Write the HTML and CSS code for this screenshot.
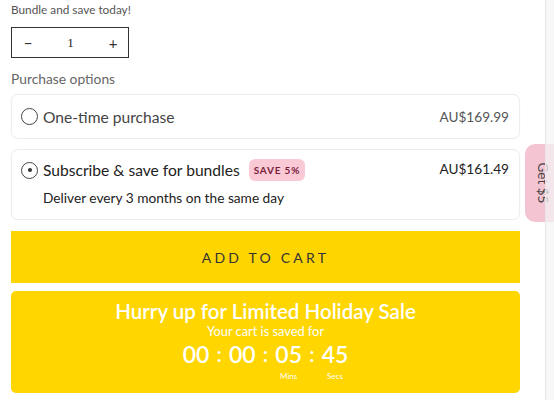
FILE: index.html
```html
<!DOCTYPE html>
<html>
<head>
<meta charset="utf-8">
<link rel="stylesheet" href="styles.css">
</head>
<body>
<main class="product">
  <p class="tagline">Bundle and save today!</p>
  <div class="qty">
    <span class="qty-btn">−</span>
    <span class="qty-val">1</span>
    <span class="qty-btn">+</span>
  </div>
  <p class="label">Purchase options</p>
  <div class="option">
    <div class="opt-row">
      <span class="radio"></span>
      <span class="opt-title muted">One-time purchase</span>
      <span class="price muted">AU$169.99</span>
    </div>
  </div>
  <div class="option selected">
    <div class="opt-row">
      <span class="radio checked"></span>
      <span class="opt-title">Subscribe &amp; save for bundles</span>
      <span class="badge">SAVE 5%</span>
      <span class="price">AU$161.49</span>
    </div>
    <p class="deliver">Deliver every 3 months on the same day</p>
  </div>
  <button class="cart">ADD TO CART</button>
  <section class="sale">
    <h2>Hurry up for Limited Holiday Sale</h2>
    <p class="saved">Your cart is saved for</p>
    <div class="timer">
      <div class="unit"><span class="num">00</span><span class="unit-label"></span></div>
      <span class="sep">:</span>
      <div class="unit"><span class="num">00</span><span class="unit-label"></span></div>
      <span class="sep">:</span>
      <div class="unit"><span class="num">05</span><span class="unit-label">Mins</span></div>
      <span class="sep">:</span>
      <div class="unit"><span class="num">45</span><span class="unit-label">Secs</span></div>
    </div>
  </section>
</main>
<div class="get-tab"><span>Get $5</span></div>
<div class="scroll-strip"></div>
</body>
</html>
```
FILE: styles.css
```css
* { box-sizing: border-box; }
html, body { margin: 0; padding: 0; background: #fff; }
body {
  font-family: "Lato", "Noto Sans", sans-serif;
  color: #222;
  overflow: hidden;
}
.product {
  width: 509px;
  margin-left: 11px;
  padding-top: 3px;
}
.tagline {
  margin: 0;
  font-size: 11.8px;
  color: #555;
  line-height: 14px;
}
.qty {
  margin-top: 10px;
  width: 118px;
  height: 31px;
  border: 1px solid #333;
  display: flex;
  align-items: center;
  justify-content: space-between;
  padding: 0 9px 0 10px;
}
.qty-btn { font-size: 15px; color: #333; width: 12px; text-align: center; }
.qty-val { font-family: "Liberation Serif", serif; font-size: 13px; color: #222; }
.label {
  margin: 13px 0 0;
  font-size: 13.8px;
  color: #666;
  line-height: 16px;
}
.option {
  margin-top: 7px;
  border: 1px solid #ececec;
  border-radius: 7px;
  padding: 0 10px 0 9px;
  box-shadow: 0 0 2px rgba(0,0,0,0.04);
}
.opt-row {
  display: flex;
  align-items: center;
  height: 43px;
}
.option.selected { margin-top: 10px; padding-bottom: 13px; }
.option.selected .opt-row { height: 40px; align-items: center; }
.radio {
  width: 17px;
  height: 17px;
  border: 1.3px solid #444;
  border-radius: 50%;
  margin-right: 5px;
  flex: none;
  position: relative;
}
.radio.checked::after {
  content: "";
  position: absolute;
  width: 4px; height: 4px;
  background: #333;
  border-radius: 50%;
  left: 50%; top: 50%;
  transform: translate(-50%, -50%);
}
.opt-title { font-size: 15.6px; color: #222; }
.opt-title.muted { color: #444; }
.price { margin-left: auto; font-size: 13.6px; color: #222; }
.price.muted { color: #555; }
.selected .price { align-self: flex-start; margin-top: 11px; }
.badge {
  margin-left: 9px;
  background: #f9c9d6;
  color: #7a1d3a;
  font-size: 10px;
  font-weight: 700;
  letter-spacing: 0.8px;
  padding: 5px 5px;
  border-radius: 6px;
  line-height: 12px;
}
.deliver {
  margin: 0 0 0 22px;
  font-size: 13.7px;
  color: #222;
  line-height: 16px;
}
.cart {
  display: block;
  width: 100%;
  margin-top: 11px;
  height: 52px;
  border: none;
  background: #ffd500;
  font-family: "Lato", sans-serif;
  font-size: 14px;
  letter-spacing: 3.2px;
  color: #333;
  cursor: pointer;
}
.sale {
  margin-top: 8px;
  background: #ffd600;
  border-radius: 5px;
  color: #fff;
  text-align: center;
  padding: 8px 0 14px;
  height: 102px;
}
.sale h2 {
  margin: 0;
  font-size: 20.5px;
  font-weight: 600;
  line-height: 24px;
}
.saved { margin: 1px 0 0; font-size: 12.8px; line-height: 15px; }
.timer {
  display: flex;
  justify-content: center;
  align-items: flex-start;
  gap: 5px;
  margin-top: 1px;
}
.unit { display: flex; flex-direction: column; align-items: center; width: 31px; }
.num { font-size: 23px; font-weight: 600; line-height: 28px; }
.sep { font-size: 21px; font-weight: 600; line-height: 28px; }
.unit-label { font-size: 8px; line-height: 10px; margin-top: 3px; height: 10px; }
.get-tab {
  position: fixed;
  left: 525px;
  top: 144px;
  width: 40px;
  height: 78px;
  background: #f5c4d3;
  border-radius: 10px 0 0 10px;
  display: flex;
  align-items: center;
  justify-content: center;
}
.get-tab span {
  display: block;
  transform: rotate(90deg);
  white-space: nowrap;
  font-size: 13.5px;
  color: #444;
  margin-left: -4px;
}
.scroll-strip {
  position: fixed;
  left: 545px;
  top: 0;
  width: 9px;
  height: 100%;
  background: rgba(244,244,244,0.72);
  border-left: 1px solid #e6e6e6;
}
```
